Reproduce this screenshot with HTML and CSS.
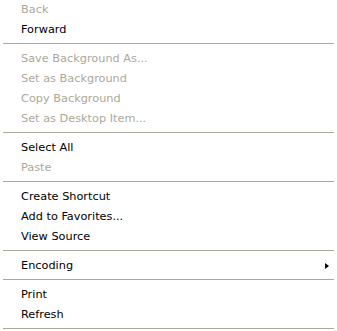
FILE: index.html
```html
<!DOCTYPE html>
<html lang="en">
<head>
    <meta charset="UTF-8">
    <meta name="viewport" content="width=device-width, initial-scale=1.0">
    <title>Context Menu</title>
    <link rel="stylesheet" href="styles.css">
</head>
<body>
    <div class="menu">
        <div class="item disabled">Back</div>
        <div class="item">Forward</div>
        <div class="sep"></div>
        <div class="item disabled">Save Background As...</div>
        <div class="item disabled">Set as Background</div>
        <div class="item disabled">Copy Background</div>
        <div class="item disabled">Set as Desktop Item...</div>
        <div class="sep"></div>
        <div class="item">Select All</div>
        <div class="item disabled">Paste</div>
        <div class="sep"></div>
        <div class="item">Create Shortcut</div>
        <div class="item">Add to Favorites...</div>
        <div class="item">View Source</div>
        <div class="sep"></div>
        <div class="item submenu">Encoding <span class="arrow"></span></div>
        <div class="sep"></div>
        <div class="item">Print</div>
        <div class="item">Refresh</div>
        <div class="sep"></div>
    </div>
</body>
</html>
```

FILE: styles.css
```css
:root {
    --disabled-color: #aca899;
    --sep-color: #aca899;
}

* {
    margin: 0;
    padding: 0;
    box-sizing: border-box;
}

body {
    font-family: 'DejaVu Sans', Tahoma, sans-serif;
    font-size: 11.3px;
    background-color: white;
    color: black;
    overflow: hidden;
}

.menu {
    margin-top: -1px;
    padding: 0 3px;
}

.item {
    height: 20px;
    line-height: 16px;
    padding: 3px 0 1px 18px;
    display: flex;
    align-items: center;
}

.item.disabled {
    color: var(--disabled-color);
}

.submenu {
    justify-content: space-between;
}

.arrow {
    width: 0;
    height: 0;
    border-top: 3.5px solid transparent;
    border-bottom: 3.5px solid transparent;
    border-left: 4px solid black;
    margin-right: 5px;
}

.sep {
    height: 9px;
    padding-top: 4px;
}

.sep::after {
    content: '';
    display: block;
    height: 1px;
    background-color: var(--sep-color);
}
```
